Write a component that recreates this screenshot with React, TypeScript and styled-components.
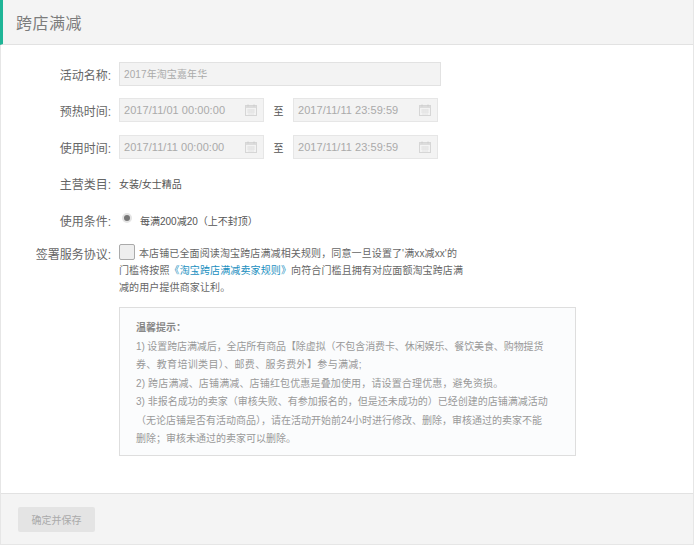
import React from "react";
import styled, { createGlobalStyle } from "styled-components";

const GlobalStyle = createGlobalStyle`
  html, body {
    margin: 0;
    padding: 0;
    background: #fff;
  }
  body {
    font-family: "Liberation Sans", "Noto Sans CJK SC", sans-serif;
    font-size: 12px;
    color: #666;
  }
`;

const Page = styled.div`
  width: 694px;
  height: 545px;
  box-sizing: border-box;
  border-left: 1px solid #e6e6e6;
  border-right: 1px solid #e6e6e6;
  border-bottom: 1px solid #e6e6e6;
  display: flex;
  flex-direction: column;
`;

const Header = styled.div`
  height: 45px;
  box-sizing: border-box;
  margin-left: -1px;
  background: #f4f4f4;
  border-left: 3px solid #1fb597;
  border-bottom: 1px solid #e2e2e2;
  padding-left: 13px;
  display: flex;
  align-items: center;
  font-size: 16px;
  letter-spacing: 0.5px;
  color: #7c7c7c;
`;

const Form = styled.div`
  flex: 1;
  padding-top: 17px;
  display: flex;
  flex-direction: column;
`;

const Row = styled.div<{ $mb: number }>`
  display: flex;
  align-items: center;
  height: 24px;
  margin-bottom: ${(p) => p.$mb}px;
`;

const Label = styled.div`
  width: 110px;
  flex: none;
  text-align: right;
  color: #666;
  white-space: nowrap;
  font-size: 12px;
`;

const FieldWrap = styled.div`
  margin-left: 8px;
  display: flex;
  align-items: center;
`;

const NameInput = styled.div`
  width: 322px;
  height: 24px;
  box-sizing: border-box;
  background: #f3f3f3;
  border: 1px solid #e2e2e2;
  padding-left: 4px;
  line-height: 23px;
  font-size: 10px;
  letter-spacing: 0.1px;
  color: #aaa;
`;

const DateField = styled.div`
  width: 145px;
  height: 24px;
  box-sizing: border-box;
  background: #f3f3f3;
  border: 1px solid #e6e6e6;
  padding: 0 6px 0 4px;
  display: flex;
  align-items: center;
  justify-content: space-between;
  font-size: 11px;
  letter-spacing: 0.05px;
  color: #aaa;
`;

const To = styled.span`
  width: 29px;
  text-align: center;
  font-size: 10px;
  color: #555;
`;

const Plain = styled.span`
  font-size: 10px;
  color: #555;
`;

const Radio = styled.span`
  width: 10px;
  height: 10px;
  box-sizing: border-box;
  margin: -5px 8px 0 3px;
  border-radius: 50%;
  background: #777;
  border: 2px solid #e4e4e4;
`;

const AgreeRow = styled.div`
  display: flex;
  align-items: flex-start;
  margin-bottom: 11px;
`;

const AgreeLabel = styled(Label)`
  padding-top: 2px;
`;

const AgreeText = styled.div`
  margin-left: 8px;
  padding-top: 1px;
  white-space: nowrap;
  font-size: 10px;
  line-height: 17px;
  letter-spacing: 0.12px;
  color: #666;
`;

const Check = styled.span`
  display: inline-block;
  width: 16px;
  height: 16px;
  box-sizing: border-box;
  margin-right: 4px;
  vertical-align: -3px;
  background: #eee;
  border: 1px solid #aaa;
  border-radius: 2px;
`;

const RuleLink = styled.a`
  color: #1a8fc0;
`;

const Notice = styled.div`
  margin-left: 118px;
  width: 457px;
  height: 149px;
  box-sizing: border-box;
  background: #fbfcfd;
  border: 1px solid #dedede;
  padding: 11px 16px;
  font-size: 10px;
  line-height: 18.5px;
  color: #999;
  white-space: nowrap;
`;

const NoticeTitle = styled.div`
  font-weight: bold;
  color: #888;
`;

const NoticeLine = styled.div<{ $spacing: number }>`
  letter-spacing: ${(p) => p.$spacing}px;
`;

const Footer = styled.div`
  height: 51px;
  box-sizing: border-box;
  background: #f4f4f4;
  border-top: 1px solid #e2e2e2;
  padding: 13px 0 0 17px;
`;

const SaveButton = styled.button`
  display: block;
  width: 77px;
  height: 25px;
  padding: 0;
  border: 0;
  border-radius: 2px;
  background: #e4e4e4;
  color: #aaa;
  font-family: inherit;
  font-size: 10px;
`;

const CalendarIcon = () => (
  <svg width="12" height="12" viewBox="0 0 12 12" fill="none">
    <rect x="0.5" y="1.5" width="11" height="10" fill="#f3f3f3" stroke="#d6d6d6" />
    <rect x="1" y="2" width="10" height="2" fill="#dcdcdc" />
    <path d="M3 0.5v2M9 0.5v2" stroke="#cccccc" />
    <path d="M2 6h8M2 8h8M4 5v6M6 5v6M8 5v6" stroke="#e0e0e0" strokeWidth="0.8" />
  </svg>
);

const DateInput = ({ value }: { value: string }) => (
  <DateField>
    {value}
    <CalendarIcon />
  </DateField>
);

export default function App() {
  return (
    <>
      <GlobalStyle />
      <Page>
        <Header>跨店满减</Header>
        <Form>
          <Row $mb={12}>
            <Label>活动名称:</Label>
            <FieldWrap>
              <NameInput>2017年淘宝嘉年华</NameInput>
            </FieldWrap>
          </Row>
          <Row $mb={13}>
            <Label>预热时间:</Label>
            <FieldWrap>
              <DateInput value="2017/11/01 00:00:00" />
              <To>至</To>
              <DateInput value="2017/11/11 23:59:59" />
            </FieldWrap>
          </Row>
          <Row $mb={12}>
            <Label>使用时间:</Label>
            <FieldWrap>
              <DateInput value="2017/11/11 00:00:00" />
              <To>至</To>
              <DateInput value="2017/11/11 23:59:59" />
            </FieldWrap>
          </Row>
          <Row $mb={13}>
            <Label>主营类目:</Label>
            <FieldWrap>
              <Plain>女装/女士精品</Plain>
            </FieldWrap>
          </Row>
          <Row $mb={11}>
            <Label>使用条件:</Label>
            <FieldWrap>
              <Radio />
              <Plain>每满200减20（上不封顶）</Plain>
            </FieldWrap>
          </Row>
          <AgreeRow>
            <AgreeLabel>签署服务协议:</AgreeLabel>
            <AgreeText>
              <Check />
              本店铺已全面阅读淘宝跨店满减相关规则，同意一旦设置了'满xx减xx'的
              <br />
              门槛将按照<RuleLink>《淘宝跨店满减卖家规则》</RuleLink>向符合门槛且拥有对应面额淘宝跨店满
              <br />
              减的用户提供商家让利。
            </AgreeText>
          </AgreeRow>
          <Notice>
            <NoticeTitle>温馨提示：</NoticeTitle>
            <NoticeLine $spacing={-0.1}>
              1) 设置跨店满减后，全店所有商品【除虚拟（不包含消费卡、休闲娱乐、餐饮美食、购物提货
            </NoticeLine>
            <NoticeLine $spacing={0.35}>券、教育培训类目）、邮费、服务费外】参与满减;</NoticeLine>
            <NoticeLine $spacing={0.15}>
              2) 跨店满减、店铺满减、店铺红包优惠是叠加使用，请设置合理优惠，避免资损。
            </NoticeLine>
            <NoticeLine $spacing={0}>
              3) 非报名成功的卖家（审核失败、有参加报名的，但是还未成功的）已经创建的店铺满减活动
            </NoticeLine>
            <NoticeLine $spacing={0}>
              （无论店铺是否有活动商品），请在活动开始前24小时进行修改、删除，审核通过的卖家不能
            </NoticeLine>
            <NoticeLine $spacing={0}>删除；审核未通过的卖家可以删除。</NoticeLine>
          </Notice>
        </Form>
        <Footer>
          <SaveButton>确定并保存</SaveButton>
        </Footer>
      </Page>
    </>
  );
}
